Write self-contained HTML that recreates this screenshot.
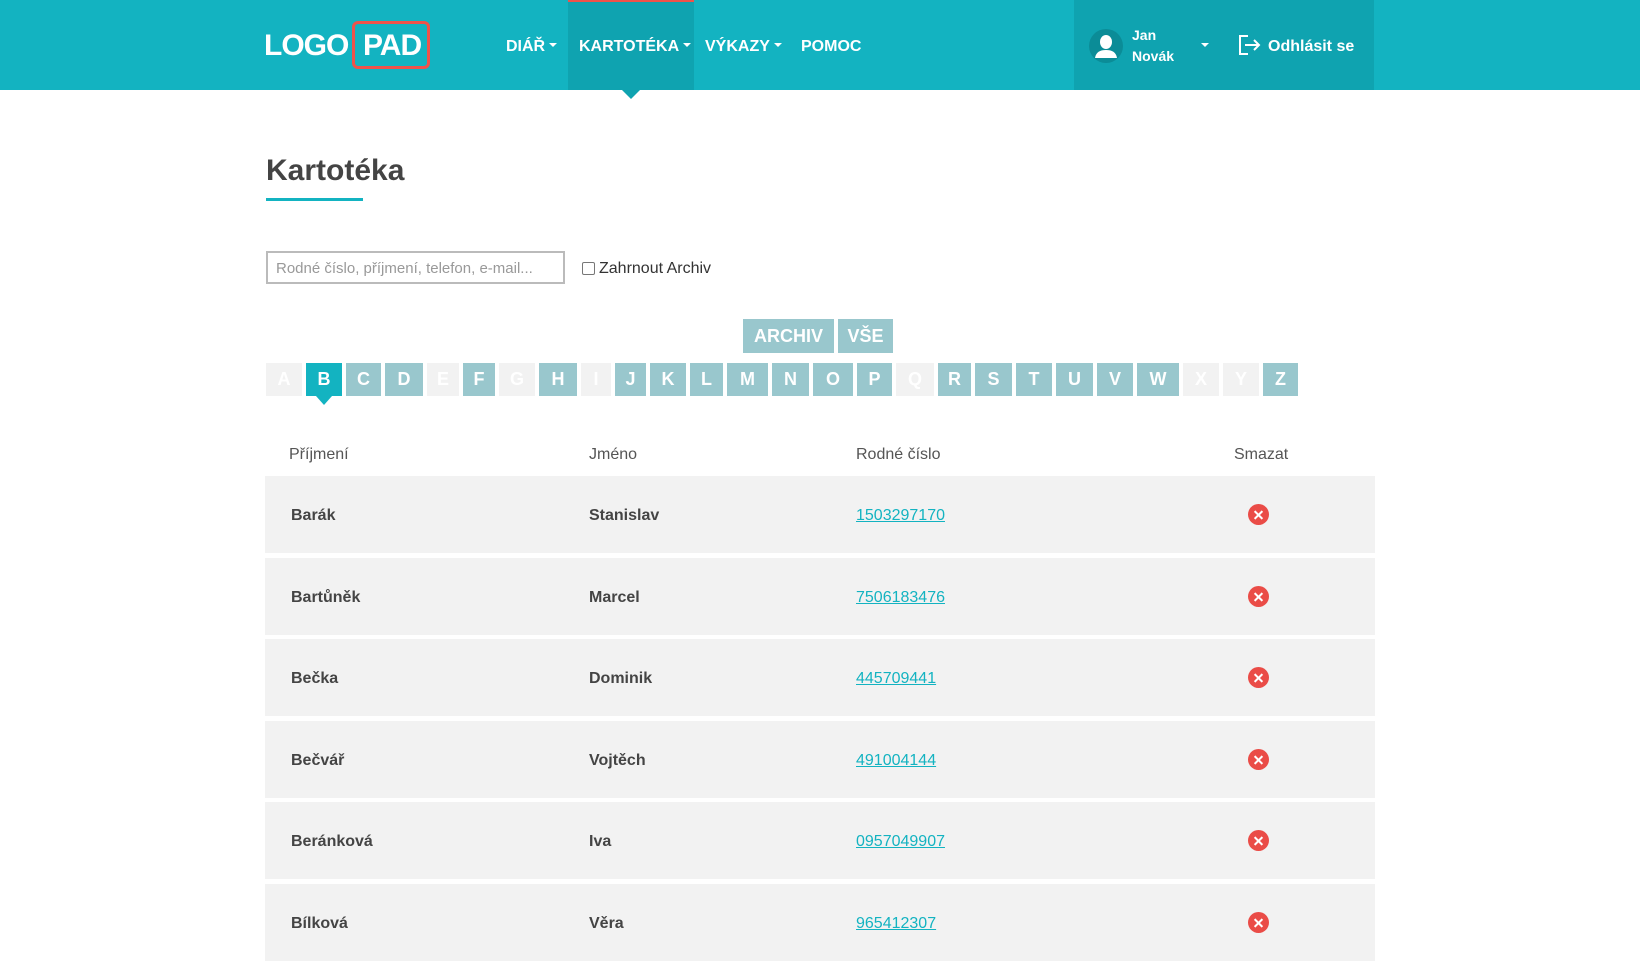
<!DOCTYPE html>
<html><head><meta charset="utf-8">
<style>
*{margin:0;padding:0;box-sizing:border-box}
body{width:1640px;height:919px;overflow:hidden;background:#fff;font-family:"Liberation Sans",sans-serif;color:#444;position:relative}
.hdr{position:absolute;left:0;top:0;width:1640px;height:90px;background:#13b3c1}
.abs{position:absolute}
.logo{top:25px;font-size:30px;font-weight:bold;color:#fff;letter-spacing:-1px;line-height:42px}
.pad{position:absolute;left:352px;top:21px;width:78px;height:48px;border:3px solid #f0524a;border-radius:6px}
.nav{font-size:16px;font-weight:bold;color:#fff;top:38px;line-height:18px}
.car{display:inline-block;width:0;height:0;border-left:4px solid transparent;border-right:4px solid transparent;border-top:4px solid #fff;vertical-align:middle;margin-left:4px;margin-top:-4px}
.active{left:568px;top:0;width:126px;height:90px;background:#0fa3b0;border-top:2px solid #f0524a}
.user{left:1074px;top:0;width:300px;height:90px;background:#0fa3b0}
.letters{position:absolute;left:266px;top:363px;display:flex;gap:4px}
.letters div{height:33px;background:#99c7cd;color:#fff;font-weight:bold;font-size:18px;text-align:center;line-height:33px;position:relative}
.letters div.d{background:#f2f2f2}
.letters div.a{background:#13b3c1}
.letters div.a:after{content:"";position:absolute;left:50%;margin-left:-8px;bottom:-9px;border-left:8px solid transparent;border-right:8px solid transparent;border-top:9px solid #13b3c1}
.btn{top:319px;height:34px;background:#99c7cd;color:#fff;font-weight:bold;font-size:18px;line-height:34px;text-align:center}
.th{top:446px;font-size:16px;color:#555}
.row{position:absolute;left:265px;width:1110px;height:77px;background:#f2f2f2;font-size:16px}
.row span{position:absolute;top:31px;line-height:18px}
.row .n{left:26px;font-weight:bold}
.row .j{left:324px;font-weight:bold}
.row .r{left:591px;color:#13b3c1;text-decoration:underline}
.row .x{left:983px;top:28px;width:21px;height:21px;border-radius:50%;background:#ea4c47}
.row .x:before,.row .x:after{content:"";position:absolute;left:5px;top:9.5px;width:11px;height:2px;background:#fff;transform:rotate(45deg)}
.row .x:after{transform:rotate(-45deg)}
</style></head><body>
<div class="hdr"></div>
<div class="abs active"></div>
<div class="abs" style="left:622px;top:90px;border-left:9px solid transparent;border-right:9px solid transparent;border-top:9px solid #0fa3b0"></div>
<div class="abs logo" style="left:264px">LOGO</div>
<div class="abs logo" style="left:363px">PAD</div>
<div class="pad"></div>
<div class="abs nav" style="left:506px">DIÁŘ<span class="car"></span></div>
<div class="abs nav" style="left:579px">KARTOTÉKA<span class="car"></span></div>
<div class="abs nav" style="left:705px">VÝKAZY<span class="car"></span></div>
<div class="abs nav" style="left:801px">POMOC</div>
<div class="abs user"></div>
<svg class="abs" style="left:1089px;top:29px" width="34" height="34" viewBox="0 0 34 34"><circle cx="17" cy="17" r="17" fill="#0b8c97"/><ellipse cx="17" cy="13" rx="6" ry="7" fill="#fff"/><path d="M6 29c1-6 5-8 11-8s10 2 11 8z" fill="#fff"/></svg>
<div class="abs" style="left:1132px;top:25px;font-size:14px;font-weight:bold;color:#fff;line-height:21px">Jan<br>Novák</div>
<div class="abs" style="left:1201px;top:43px;border-left:4px solid transparent;border-right:4px solid transparent;border-top:4px solid #fff"></div>
<svg class="abs" style="left:1239px;top:35px" width="22" height="20" viewBox="0 0 22 20"><path d="M9 1H1v18h8" fill="none" stroke="#fff" stroke-width="2"/><path d="M6 10h14M15 5l5 5-5 5" fill="none" stroke="#fff" stroke-width="2"/></svg>
<div class="abs nav" style="left:1268px">Odhlásit se</div>

<div class="abs" style="left:266px;top:154px;font-size:30px;font-weight:bold;color:#444">Kartotéka</div>
<div class="abs" style="left:266px;top:198px;width:97px;height:3px;background:#13b3c1"></div>
<div class="abs" style="left:266px;top:251px;width:299px;height:33px;border:2px solid #bbb;font-size:15px;color:#999;padding:7px 8px">Rodné číslo, příjmení, telefon, e-mail...</div>
<div class="abs" style="left:582px;top:262px;width:13px;height:13px;border:1px solid #777;border-radius:2px"></div>
<div class="abs" style="left:599px;top:260px;font-size:16px;color:#333">Zahrnout Archiv</div>

<div class="abs btn" style="left:743px;width:91px">ARCHIV</div>
<div class="abs btn" style="left:838px;width:55px">VŠE</div>
<div class="letters">
<div class="d" style="width:36px">A</div><div class="a" style="width:36px">B</div><div style="width:35px">C</div><div style="width:38px">D</div><div class="d" style="width:32px">E</div><div style="width:32px">F</div><div class="d" style="width:36px">G</div><div style="width:38px">H</div><div class="d" style="width:30px">I</div><div style="width:31px">J</div><div style="width:36px">K</div><div style="width:33px">L</div><div style="width:41px">M</div><div style="width:37px">N</div><div style="width:40px">O</div><div style="width:35px">P</div><div class="d" style="width:38px">Q</div><div style="width:33px">R</div><div style="width:37px">S</div><div style="width:36px">T</div><div style="width:37px">U</div><div style="width:36px">V</div><div style="width:42px">W</div><div class="d" style="width:36px">X</div><div class="d" style="width:36px">Y</div><div style="width:35px">Z</div>
</div>

<div class="abs th" style="left:289px">Příjmení</div>
<div class="abs th" style="left:589px">Jméno</div>
<div class="abs th" style="left:856px">Rodné číslo</div>
<div class="abs th" style="left:1234px">Smazat</div>

<div class="row" style="top:476px"><span class="n">Barák</span><span class="j">Stanislav</span><span class="r">1503297170</span><span class="x"></span></div>
<div class="row" style="top:558px"><span class="n">Bartůněk</span><span class="j">Marcel</span><span class="r">7506183476</span><span class="x"></span></div>
<div class="row" style="top:639px"><span class="n">Bečka</span><span class="j">Dominik</span><span class="r">445709441</span><span class="x"></span></div>
<div class="row" style="top:721px"><span class="n">Bečvář</span><span class="j">Vojtěch</span><span class="r">491004144</span><span class="x"></span></div>
<div class="row" style="top:802px"><span class="n">Beránková</span><span class="j">Iva</span><span class="r">0957049907</span><span class="x"></span></div>
<div class="row" style="top:884px"><span class="n">Bílková</span><span class="j">Věra</span><span class="r">965412307</span><span class="x"></span></div>
</body></html>
